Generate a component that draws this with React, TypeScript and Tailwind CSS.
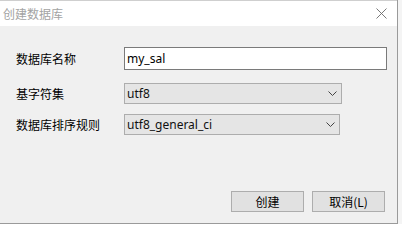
import React from "react";

const cjk = { fontFamily: '"Noto Sans CJK SC", "Noto Sans", sans-serif' };
const latin = { fontFamily: '"Noto Sans", "Noto Sans CJK SC", sans-serif' };

function Chevron() {
  return (
    <svg width="9" height="5" viewBox="0 0 9 5" className="shrink-0">
      <polyline points="0.5,0.5 4.5,4.5 8.5,0.5" fill="none" stroke="#444" strokeWidth="1" />
    </svg>
  );
}

function Select({ value, w }: { value: string; w: string }) {
  return (
    <div className={`${w} h-[21px] flex items-center border border-[#adadad] bg-[#e5e5e5] pl-[2px] pr-[4px]`}>
      <span className="flex-1 text-[12px] leading-none text-[#111]" style={latin}>{value}</span>
      <Chevron />
    </div>
  );
}

export default function App() {
  return (
    <div className="w-[402px] h-[224px] flex bg-[#f4f4f4] overflow-hidden">
      <div className="w-[398px] h-[224px] flex flex-col border-r border-b border-[#9a9a9a]">
        <div className="h-[26px] bg-white border-t border-[#cfcfcf] flex items-center pl-[3px] pr-[10px]">
          <span className="flex-1 text-[12px] text-[#a3a3a3] leading-none" style={cjk}>创建数据库</span>
          <svg width="11" height="11" viewBox="0 0 11 11">
            <line x1="0.5" y1="0.5" x2="10.5" y2="10.5" stroke="#6a6a6a" strokeWidth="0.9" />
            <line x1="10.5" y1="0.5" x2="0.5" y2="10.5" stroke="#6a6a6a" strokeWidth="0.9" />
          </svg>
        </div>
        <div className="flex-1 bg-[#f0f0f0] flex flex-col pl-[16px]">
          <div className="mt-[21px] flex items-center h-[23px]">
            <span className="w-[108px] text-[12px] text-black" style={cjk}>数据库名称</span>
            <div className="w-[263px] h-[23px] border border-[#7a7a7a] bg-white flex items-center pl-[2px]">
              <span className="text-[12px] leading-none text-black" style={latin}>my_sal</span>
            </div>
          </div>
          <div className="mt-[13px] flex items-center h-[21px]">
            <span className="w-[108px] text-[12px] text-black" style={cjk}>基字符集</span>
            <Select value="utf8" w="w-[218px]" />
          </div>
          <div className="mt-[10px] flex items-center h-[21px]">
            <span className="w-[108px] text-[12px] text-black" style={cjk}>数据库排序规则</span>
            <Select value="utf8_general_ci" w="w-[216px]" />
          </div>
          <div className="mt-auto mb-[11px] flex justify-end gap-[8px] pr-[12px]">
            <div className="w-[73px] h-[21px] border border-[#adadad] bg-[#e1e1e1] flex items-center justify-center text-[12px] text-black" style={cjk}>创建</div>
            <div className="w-[73px] h-[21px] border border-[#adadad] bg-[#e1e1e1] flex items-center justify-center text-[12px] text-black" style={cjk}>取消(L)</div>
          </div>
        </div>
      </div>
    </div>
  );
}
